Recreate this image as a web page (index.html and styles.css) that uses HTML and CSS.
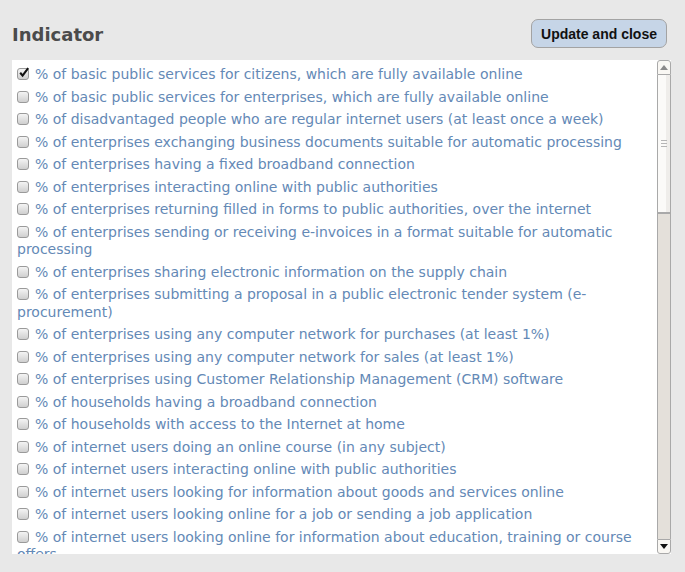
FILE: index.html
```html
<!DOCTYPE html>
<html lang="en">
<head>
<meta charset="utf-8">
<title>Indicator</title>
<link rel="stylesheet" href="styles.css">
</head>
<body>
<div class="panel">
  <div class="header">
    <h2 class="title">Indicator</h2>
    <button class="btn" type="button">Update and close</button>
  </div>
  <div class="listbox">
    <div class="list">
      <div class="item"><span class="cb checked"><svg viewBox="0 0 12 12" width="12" height="12"><path d="M2.2 5.8 L4.6 8.6 L10.2 1.2" fill="none" stroke="#111" stroke-width="2.1"/></svg></span><span class="lbl">% of basic public services for citizens, which are fully available online</span></div>
      <div class="item"><span class="cb"></span><span class="lbl">% of basic public services for enterprises, which are fully available online</span></div>
      <div class="item"><span class="cb"></span><span class="lbl">% of disadvantaged people who are regular internet users (at least once a week)</span></div>
      <div class="item"><span class="cb"></span><span class="lbl">% of enterprises exchanging business documents suitable for automatic processing</span></div>
      <div class="item"><span class="cb"></span><span class="lbl">% of enterprises having a fixed broadband connection</span></div>
      <div class="item"><span class="cb"></span><span class="lbl">% of enterprises interacting online with public authorities</span></div>
      <div class="item"><span class="cb"></span><span class="lbl">% of enterprises returning filled in forms to public authorities, over the internet</span></div>
      <div class="item"><span class="cb"></span><span class="lbl">% of enterprises sending or receiving e-invoices in a format suitable for automatic processing</span></div>
      <div class="item"><span class="cb"></span><span class="lbl">% of enterprises sharing electronic information on the supply chain</span></div>
      <div class="item"><span class="cb"></span><span class="lbl">% of enterprises submitting a proposal in a public electronic tender system (e-procurement)</span></div>
      <div class="item"><span class="cb"></span><span class="lbl">% of enterprises using any computer network for purchases (at least 1%)</span></div>
      <div class="item"><span class="cb"></span><span class="lbl">% of enterprises using any computer network for sales (at least 1%)</span></div>
      <div class="item"><span class="cb"></span><span class="lbl">% of enterprises using Customer Relationship Management (CRM) software</span></div>
      <div class="item"><span class="cb"></span><span class="lbl">% of households having a broadband connection</span></div>
      <div class="item"><span class="cb"></span><span class="lbl">% of households with access to the Internet at home</span></div>
      <div class="item"><span class="cb"></span><span class="lbl">% of internet users doing an online course (in any subject)</span></div>
      <div class="item"><span class="cb"></span><span class="lbl">% of internet users interacting online with public authorities</span></div>
      <div class="item"><span class="cb"></span><span class="lbl">% of internet users looking for information about goods and services online</span></div>
      <div class="item"><span class="cb"></span><span class="lbl">% of internet users looking online for a job or sending a job application</span></div>
      <div class="item"><span class="cb"></span><span class="lbl">% of internet users looking online for information about education, training or course offers</span></div>
    </div>
    <div class="scrollbar" aria-hidden="true">
      <div class="sb-btn sb-up"><svg viewBox="0 0 8 5" width="8" height="5"><path d="M0 5 L4 0 L8 5 Z" fill="#8a8a8a"/></svg></div>
      <div class="sb-thumb"><span class="grip"></span></div>
      <div class="sb-track"></div>
      <div class="sb-btn sb-down"><svg viewBox="0 0 8 5" width="8" height="5"><path d="M0 0 L8 0 L4 5 Z" fill="#111"/></svg></div>
    </div>
  </div>
</div>
</body>
</html>
```
FILE: styles.css
```css
html, body {
  margin: 0;
  padding: 0;
  background: #e8e8e8;
}
body {
  font-family: "DejaVu Sans", Verdana, sans-serif;
}
.panel {
  padding: 19px 14px 0 12px;
  width: 659px;
}
.header {
  display: flex;
  align-items: center;
  justify-content: space-between;
  height: 29px;
  margin-bottom: 12px;
}
.title {
  margin: 0;
  font-size: 18px;
  font-weight: bold;
  color: #4b4b4b;
  position: relative;
  top: 1px;
}
.btn {
  height: 29px;
  width: 136px;
  margin-right: 4px;
  padding: 0;
  border: 1px solid #a3a3a3;
  border-radius: 7px;
  background: #c6d5e7;
  font-family: "Liberation Sans", Arial, sans-serif;
  font-weight: bold;
  font-size: 14px;
  color: #111;
}
.listbox {
  display: flex;
  height: 494px;
  background: #fff;
}
.list {
  flex: 1;
  overflow: hidden;
  padding: 6px 6px 0 5px;
}
.item {
  font-size: 14px;
  line-height: 17.5px;
  color: #6489b6;
  margin-bottom: 5px;
}
.cb {
  display: inline-block;
  box-sizing: border-box;
  width: 12px;
  height: 12px;
  border: 1px solid #9a9a9a;
  border-radius: 3px;
  background: linear-gradient(#f4f4f4, #cfcfcf);
  vertical-align: -1px;
  margin-right: 6px;
  position: relative;
}
.cb svg {
  position: absolute;
  left: 0;
  top: -2px;
}
.scrollbar {
  width: 14px;
  display: flex;
  flex-direction: column;
}
.sb-btn {
  box-sizing: border-box;
  height: 15px;
  border: 1px solid #a9a9a9;
  background: #f9f7f3;
  display: flex;
  align-items: center;
  justify-content: center;
}
.sb-up {
  border-radius: 3px 3px 0 0;
}
.sb-down {
  border-radius: 0 0 3px 3px;
}
.sb-thumb {
  box-sizing: border-box;
  height: 138px;
  border: 1px solid #a9a9a9;
  border-top: 0;
  background: linear-gradient(90deg, #fbfaf8 70%, #efedea 70%);
  display: flex;
  align-items: center;
  justify-content: center;
}
.grip {
  width: 6px;
  height: 5px;
  border-top: 1px solid #b5b5b5;
  border-bottom: 1px solid #b5b5b5;
  position: relative;
}
.grip::after {
  content: "";
  position: absolute;
  left: 0;
  right: 0;
  top: 2px;
  border-top: 1px solid #b5b5b5;
}
.sb-track {
  flex: 1;
  box-sizing: border-box;
  border-left: 1px solid #a9a9a9;
  border-right: 1px solid #a9a9a9;
  border-top: 1px solid #a9a9a9;
  background: #e4e0da;
}
```
